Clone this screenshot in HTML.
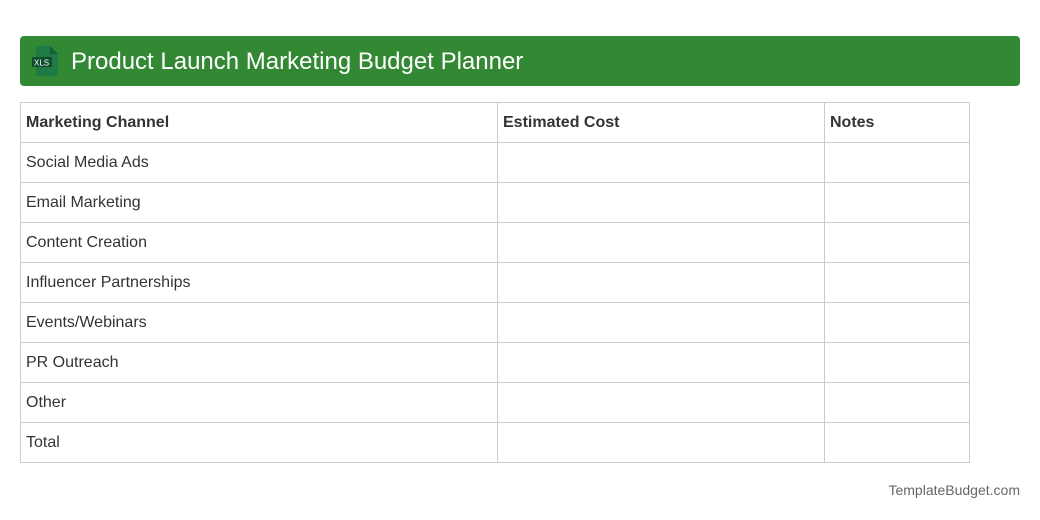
<!DOCTYPE html><html><head><style>
body{margin:0;width:1040px;height:520px;background:#fff;font-family:"Liberation Sans",Arial,sans-serif;position:relative;color:#333}
.hdr{position:absolute;left:20px;top:36px;width:1000px;height:50px;background:#338833;border-radius:4px}
.hdr h1{position:absolute;left:51px;top:12px;margin:0;font-size:24px;font-weight:normal;color:#fff;line-height:28px}
table{position:absolute;left:20px;top:102px;border-collapse:collapse;width:950px}
td{border:1px solid #ccc;height:39px;box-sizing:border-box;padding:1px 0 0 5px;font-size:16px;line-height:18px}
tr{height:40px}
tr:first-child td{font-weight:bold}
.ft{position:absolute;right:20px;top:482px;font-size:14px;color:#666}
</style></head><body>
<div class="hdr">
<svg style="position:absolute;left:11px;top:9px" width="30" height="32" viewBox="0 0 30 32">
<path d="M5 1h14l8 8v22H5z" fill="#1e7b45"/><path d="M19 1v8h8z" fill="#15603a"/>
<rect x="1" y="12" width="20" height="10" fill="#0f4f2c"/>
<text x="3" y="20.5" font-size="8" fill="#fff" font-family="Liberation Sans">XLS</text></svg>
<h1>Product Launch Marketing Budget Planner</h1></div>
<table>
<tr><td style="width:477px">Marketing Channel</td><td style="width:327px">Estimated Cost</td><td>Notes</td></tr>
<tr><td>Social Media Ads</td><td></td><td></td></tr>
<tr><td>Email Marketing</td><td></td><td></td></tr>
<tr><td>Content Creation</td><td></td><td></td></tr>
<tr><td>Influencer Partnerships</td><td></td><td></td></tr>
<tr><td>Events/Webinars</td><td></td><td></td></tr>
<tr><td>PR Outreach</td><td></td><td></td></tr>
<tr><td>Other</td><td></td><td></td></tr>
<tr><td>Total</td><td></td><td></td></tr>
</table>
<div class="ft">TemplateBudget.com</div>
</body></html>
